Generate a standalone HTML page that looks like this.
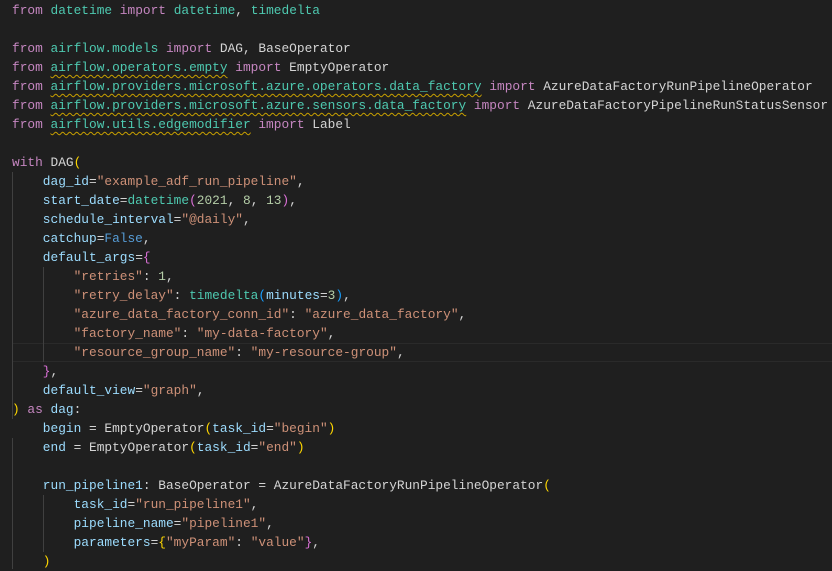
<!DOCTYPE html>
<html><head><meta charset="utf-8"><style>
html,body{margin:0;padding:0;background:#1f1f1f;width:832px;height:569px;overflow:hidden}
pre{margin:0;position:absolute;left:12px;top:1px;font-family:"Liberation Mono",monospace;font-size:12.83px;line-height:19px;color:#d4d4d4;white-space:pre}
.k{color:#c586c0}.t{color:#4ec9b0}.v{color:#9cdcfe}.s{color:#ce9178}.n{color:#b5cea8}.f{color:#dcdcaa}.b{color:#569cd6}
.g{color:#ffd700}.p{color:#da70d6}.bl{color:#179fff}
.w{text-decoration:underline wavy #c8a000;text-decoration-thickness:1px;text-underline-offset:3px}
.guide{position:absolute;width:1px;background:#404040}
.hl{position:absolute;left:12px;right:0;top:343px;height:17px;border-top:1px solid #2a2a2a;border-bottom:1px solid #2a2a2a}
</style></head><body>
<div class="hl"></div>
<div class="guide" style="left:12px;top:172px;height:247px"></div>
<div class="guide" style="left:43px;top:267px;height:95px"></div>
<div class="guide" style="left:12px;top:438px;height:131px"></div>
<div class="guide" style="left:43px;top:495px;height:57px"></div>
<pre><span class="k">from</span> <span class="t">datetime</span> <span class="k">import</span> <span class="t">datetime</span>, <span class="t">timedelta</span>

<span class="k">from</span> <span class="t">airflow.models</span> <span class="k">import</span> DAG, BaseOperator
<span class="k">from</span> <span class="t w">airflow.operators.empty</span> <span class="k">import</span> EmptyOperator
<span class="k">from</span> <span class="t w">airflow.providers.microsoft.azure.operators.data_factory</span> <span class="k">import</span> AzureDataFactoryRunPipelineOperator
<span class="k">from</span> <span class="t w">airflow.providers.microsoft.azure.sensors.data_factory</span> <span class="k">import</span> AzureDataFactoryPipelineRunStatusSensor
<span class="k">from</span> <span class="t w">airflow.utils.edgemodifier</span> <span class="k">import</span> Label

<span class="k">with</span> DAG<span class="g">(</span>
    <span class="v">dag_id</span>=<span class="s">"example_adf_run_pipeline"</span>,
    <span class="v">start_date</span>=<span class="t">datetime</span><span class="p">(</span><span class="n">2021</span>, <span class="n">8</span>, <span class="n">13</span><span class="p">)</span>,
    <span class="v">schedule_interval</span>=<span class="s">"@daily"</span>,
    <span class="v">catchup</span>=<span class="b">False</span>,
    <span class="v">default_args</span>=<span class="p">{</span>
        <span class="s">"retries"</span>: <span class="n">1</span>,
        <span class="s">"retry_delay"</span>: <span class="t">timedelta</span><span class="bl">(</span><span class="v">minutes</span>=<span class="n">3</span><span class="bl">)</span>,
        <span class="s">"azure_data_factory_conn_id"</span>: <span class="s">"azure_data_factory"</span>,
        <span class="s">"factory_name"</span>: <span class="s">"my-data-factory"</span>,
        <span class="s">"resource_group_name"</span>: <span class="s">"my-resource-group"</span>,
    <span class="p">}</span>,
    <span class="v">default_view</span>=<span class="s">"graph"</span>,
<span class="g">)</span> <span class="k">as</span> <span class="v">dag</span>:
    <span class="v">begin</span> = EmptyOperator<span class="g">(</span><span class="v">task_id</span>=<span class="s">"begin"</span><span class="g">)</span>
    <span class="v">end</span> = EmptyOperator<span class="g">(</span><span class="v">task_id</span>=<span class="s">"end"</span><span class="g">)</span>

    <span class="v">run_pipeline1</span>: BaseOperator = AzureDataFactoryRunPipelineOperator<span class="g">(</span>
        <span class="v">task_id</span>=<span class="s">"run_pipeline1"</span>,
        <span class="v">pipeline_name</span>=<span class="s">"pipeline1"</span>,
        <span class="v">parameters</span>=<span class="g">{</span><span class="s">"myParam"</span>: <span class="s">"value"</span><span class="p">}</span>,
    <span class="g">)</span>
</pre>
</body></html>
